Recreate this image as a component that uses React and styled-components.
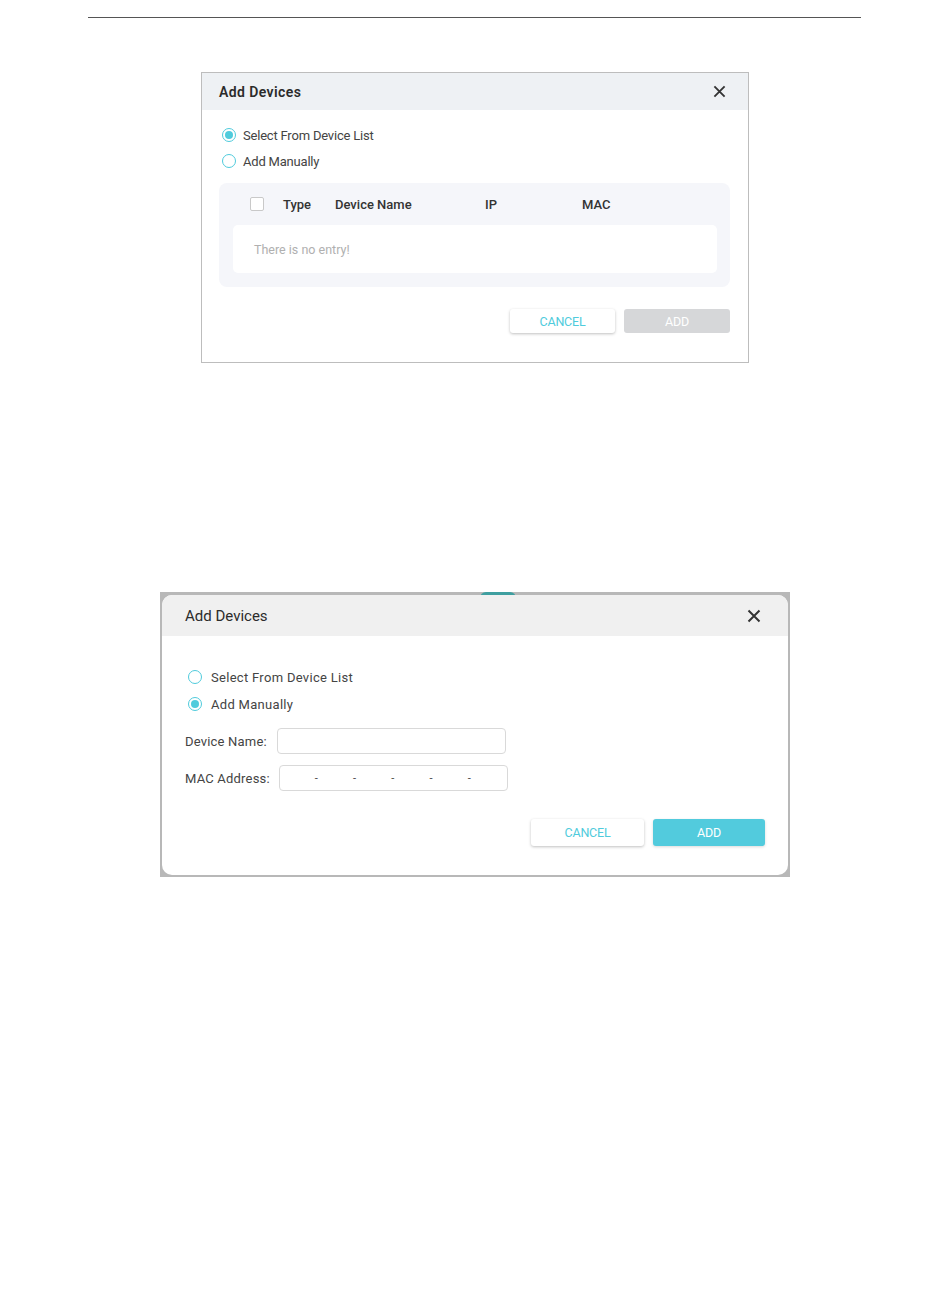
import React from "react"
import styled, { createGlobalStyle } from "styled-components"

const teal = "#4fcbdc"

const GlobalStyle = createGlobalStyle`
  body {
    margin: 0;
    background: #fff;
    font-family: Roboto, "Liberation Sans", Arial, sans-serif;
  }
`

const Page = styled.div`
  width: 950px;
  height: 1297px;
  display: flex;
  flex-direction: column;
  align-items: flex-start;
`

const Rule = styled.hr`
  margin: 17px 0 0 88px;
  width: 773px;
  border: none;
  border-top: 1px solid #555;
  height: 0;
`

/* ---------- first dialog ---------- */

const Dialog = styled.div`
  margin: 54px 0 0 201px;
  width: 546px;
  height: 289px;
  border: 1px solid #bdbdbd;
  background: #fff;
  display: flex;
  flex-direction: column;
`

const Header = styled.div`
  height: ${props => props.h}px;
  flex: none;
  background: ${props => props.bg};
  display: flex;
  align-items: center;
  justify-content: space-between;
  padding: ${props => props.pad};
`

const Title = styled.span`
  font-size: ${props => props.size}px;
  font-weight: ${props => (props.bold ? 600 : 400)};
  letter-spacing: ${props => (props.bold ? "0.4px" : "0")};
  color: #2b2b2b;
`

const Close = styled.svg`
  width: ${props => props.size}px;
  height: ${props => props.size}px;
  stroke: #333;
  stroke-width: 2;
  display: block;
`

const Body = styled.div`
  padding: ${props => props.pad};
  display: flex;
  flex-direction: column;
`

const Stack = styled.div`
  display: flex;
  flex-direction: column;
  gap: ${props => props.gap}px;
  margin-top: ${props => props.top || 0}px;
`

const RadioRow = styled.label`
  display: flex;
  align-items: center;
  gap: ${props => props.gap}px;
  height: 16px;
  font-size: 13px;
  color: #444;
  letter-spacing: ${props => props.spacing || "0"};
`

const Circle = styled.span`
  width: 12px;
  height: 12px;
  border-radius: 50%;
  border: 1px solid ${teal};
  display: flex;
  align-items: center;
  justify-content: center;
  flex: none;
  &::after {
    content: "";
    width: 8px;
    height: 8px;
    border-radius: 50%;
    background: ${props => (props.checked ? teal : "transparent")};
  }
`

const Panel = styled.div`
  margin-top: 14px;
  background: #f5f6fa;
  border-radius: 8px;
  padding: 0 13px 14px 14px;
`

const TableHead = styled.div`
  height: 42px;
  display: grid;
  grid-template-columns: 17px 14px 19px 52px 150px 97px 1fr;
  align-items: center;
  font-size: 13px;
  font-weight: 500;
  color: #333;
`

const Check = styled.span`
  width: 12px;
  height: 12px;
  border: 1px solid #c9c9c9;
  border-radius: 2px;
  background: #fff;
`

const Empty = styled.div`
  height: 48px;
  background: #fff;
  border-radius: 5px;
  padding-left: 21px;
  display: flex;
  align-items: center;
  font-size: 12.5px;
  color: #b0b0b0;
`

const Buttons = styled.div`
  display: flex;
  justify-content: flex-end;
  gap: ${props => props.gap}px;
  margin-top: ${props => props.top}px;
`

const Button = styled.button`
  width: ${props => props.w}px;
  height: ${props => props.h}px;
  border: none;
  border-radius: 3px;
  font-family: inherit;
  font-size: 12.5px;
  letter-spacing: -0.2px;
  padding: 0;
  color: ${props => (props.primary ? "#fff" : teal)};
  background: ${props =>
    props.disabled ? "#d6d7d9" : props.primary ? "#52cbdd" : "#fff"};
  box-shadow: ${props =>
    props.disabled
      ? "none"
      : props.primary
      ? "0 1px 3px rgba(0, 0, 0, 0.15)"
      : "0 1px 3px rgba(0, 0, 0, 0.25)"};
`

/* ---------- second dialog ---------- */

const Frame = styled.div`
  margin: 229px 0 0 160px;
  width: 630px;
  height: 285px;
  box-sizing: border-box;
  background: #b8b8b8;
  padding: 3px 2px 2px 2px;
  position: relative;
`

const Blob = styled.span`
  position: absolute;
  top: 0;
  left: 320px;
  width: 36px;
  height: 6px;
  border-radius: 18px 18px 0 0;
  background: #3f9fa0;
`

const Card = styled.div`
  height: 100%;
  background: #fff;
  border-radius: 10px;
  display: flex;
  flex-direction: column;
  overflow: hidden;
  position: relative;
`

const FieldRow = styled.div`
  display: flex;
  align-items: center;
  gap: ${props => props.gap}px;
  font-size: 13px;
  color: #444;
  letter-spacing: 0.2px;
`

const Input = styled.div`
  width: 227px;
  height: 24px;
  border: 1px solid #d9d9d9;
  border-radius: 4px;
  background: #fff;
  display: flex;
  align-items: center;
`

const Dashes = styled.div`
  display: flex;
  padding-left: 35px;
  gap: 35px;
  font-size: 11px;
  color: #444;
`

const CloseIcon = ({ size }) => (
  <Close size={size} viewBox="0 0 14 14" fill="none">
    <path d="M1.5 1.5l11 11M12.5 1.5l-11 11" />
  </Close>
)

const App = () => {
  return (
    <Page>
      <GlobalStyle />
      <Rule />

      <Dialog>
        <Header h={37} bg="#eef1f4" pad="0 22px 0 17px">
          <Title size={14} bold>
            Add Devices
          </Title>
          <CloseIcon size={13} />
        </Header>
        <Body pad="17px 18px 0 20px">
          <Stack gap={10}>
            <RadioRow gap={7} spacing="-0.2px">
              <Circle checked />
              Select From Device List
            </RadioRow>
            <RadioRow gap={7} spacing="-0.2px">
              <Circle />
              Add Manually
            </RadioRow>
          </Stack>
          <Panel style={{ marginLeft: -3 }}>
            <TableHead>
              <span />
              <Check />
              <span />
              <span>Type</span>
              <span>Device Name</span>
              <span>IP</span>
              <span>MAC</span>
            </TableHead>
            <Empty>There is no entry!</Empty>
          </Panel>
          <Buttons gap={9} top={22}>
            <Button w={105} h={24}>
              CANCEL
            </Button>
            <Button w={106} h={24} primary disabled>
              ADD
            </Button>
          </Buttons>
        </Body>
      </Dialog>

      <Frame>
        <Blob />
        <Card>
          <Header h={41} bg="#f0f0f0" pad="0 27px 0 23px">
            <Title size={15}>Add Devices</Title>
            <CloseIcon size={14} />
          </Header>
          <Body pad="33px 23px 0 23px">
            <Stack gap={11} style={{ paddingLeft: 3 }}>
              <RadioRow gap={9} spacing="0.3px">
                <Circle />
                Select From Device List
              </RadioRow>
              <RadioRow gap={9} spacing="0.3px">
                <Circle checked />
                Add Manually
              </RadioRow>
            </Stack>
            <Stack gap={11} top={16}>
              <FieldRow gap={10}>
                Device Name:
                <Input />
              </FieldRow>
              <FieldRow gap={9}>
                MAC Address:
                <Input>
                  <Dashes>
                    <span>-</span>
                    <span>-</span>
                    <span>-</span>
                    <span>-</span>
                    <span>-</span>
                  </Dashes>
                </Input>
              </FieldRow>
            </Stack>
            <Buttons gap={9} top={28}>
              <Button w={113} h={27}>
                CANCEL
              </Button>
              <Button w={112} h={27} primary>
                ADD
              </Button>
            </Buttons>
          </Body>
        </Card>
      </Frame>
    </Page>
  )
}

export default App
